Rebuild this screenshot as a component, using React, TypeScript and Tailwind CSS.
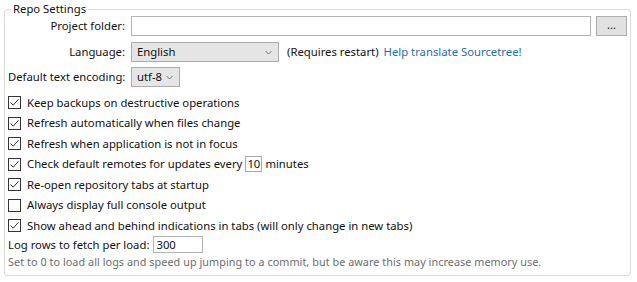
const FONT = "[font-family:'Noto_Sans',sans-serif]"

const CheckMark = () => (
  <svg width="11" height="11" viewBox="0 0 11 11" className="block">
    <path d="M1.5 5.5 L4.2 8.2 L9.5 2.2" fill="none" stroke="#333" strokeWidth="1" />
  </svg>
)

const Chevron = () => (
  <svg width="7" height="5" viewBox="0 0 7 5" className="block">
    <path d="M0.5 1 L3.5 4 L6.5 1" fill="none" stroke="#777" strokeWidth="1" />
  </svg>
)

const CheckRow = ({ checked, children }: { checked: boolean; children: React.ReactNode }) => (
  <div className="flex h-[20.5px] items-center">
    <div className="flex h-[13px] w-[13px] shrink-0 items-center justify-center border border-[#333] bg-white">
      {checked && <CheckMark />}
    </div>
    <span className="ml-[6px] whitespace-nowrap">{children}</span>
  </div>
)

export default function App() {
  return (
    <div className={`h-[282px] w-[637px] bg-white px-[4px] pt-[2px] text-[11.3px] leading-[16px] text-[#111] ${FONT}`}>
      <fieldset className="w-[627px] rounded-[3px] border border-[#dcdcdc] pb-[6px]">
        <legend className="ml-[6px] px-[2px] leading-[14px] text-[#111]">Repo Settings</legend>

        <div className="pl-[3px] pr-[2px]">
          {/* Project folder */}
          <div className="flex h-[20px] items-center">
            <span className="w-[117px] text-right">Project folder:</span>
            <div className="ml-[6px] h-[20px] w-[460px] border border-[#b4b4b4] bg-white" />
            <button className="ml-[5px] flex h-[20px] w-[31px] items-center justify-center border border-[#adadad] bg-[#e1e1e1] pb-[4px] text-[11px] leading-none">
              ...
            </button>
          </div>

          {/* Language */}
          <div className="mt-[6px] flex h-[20px] items-center">
            <span className="w-[117px] text-right">Language:</span>
            <div className="ml-[6px] flex h-[20px] w-[148px] items-center justify-between border border-[#acacac] bg-[#e5e5e5] pl-[5px] pr-[6px]">
              <span>English</span>
              <Chevron />
            </div>
            <span className="ml-[8px]">(Requires restart)</span>
            <span className="ml-[5px] text-[#1f6fa8]">Help translate Sourcetree!</span>
          </div>

          {/* Encoding */}
          <div className="mt-[5px] flex h-[20px] items-center">
            <span className="w-[117px] whitespace-nowrap text-right">Default text encoding:</span>
            <div className="ml-[6px] flex h-[20px] w-[49px] items-center justify-between border border-[#acacac] bg-[#e5e5e5] pl-[5px] pr-[6px]">
              <span>utf-8</span>
              <Chevron />
            </div>
          </div>

          <div className="mt-[5.5px]">
            <CheckRow checked>Keep backups on destructive operations</CheckRow>
            <CheckRow checked>Refresh automatically when files change</CheckRow>
            <CheckRow checked>Refresh when application is not in focus</CheckRow>
            <CheckRow checked>
              <span className="inline-flex items-center">
                Check default remotes for updates every
                <span className="mx-[3px] inline-flex h-[16px] w-[17px] items-center justify-center border border-[#a9a9a9]">10</span>
                minutes
              </span>
            </CheckRow>
            <CheckRow checked>Re-open repository tabs at startup</CheckRow>
            <CheckRow checked={false}>Always display full console output</CheckRow>
            <CheckRow checked>Show ahead and behind indications in tabs (will only change in new tabs)</CheckRow>
          </div>

          {/* Log rows */}
          <div className="flex h-[17px] items-center">
            <span>Log rows to fetch per load:</span>
            <div className="ml-[4px] flex h-[17px] w-[50px] items-center border border-[#b4b4b4] pl-[2px]">300</div>
          </div>
          <div className="mt-[2px] text-[10.8px] leading-[14px] tracking-[0.06px] text-[#6d6d6d]">
            Set to 0 to load all logs and speed up jumping to a commit, but be aware this may increase memory use.
          </div>
        </div>
      </fieldset>
    </div>
  )
}
